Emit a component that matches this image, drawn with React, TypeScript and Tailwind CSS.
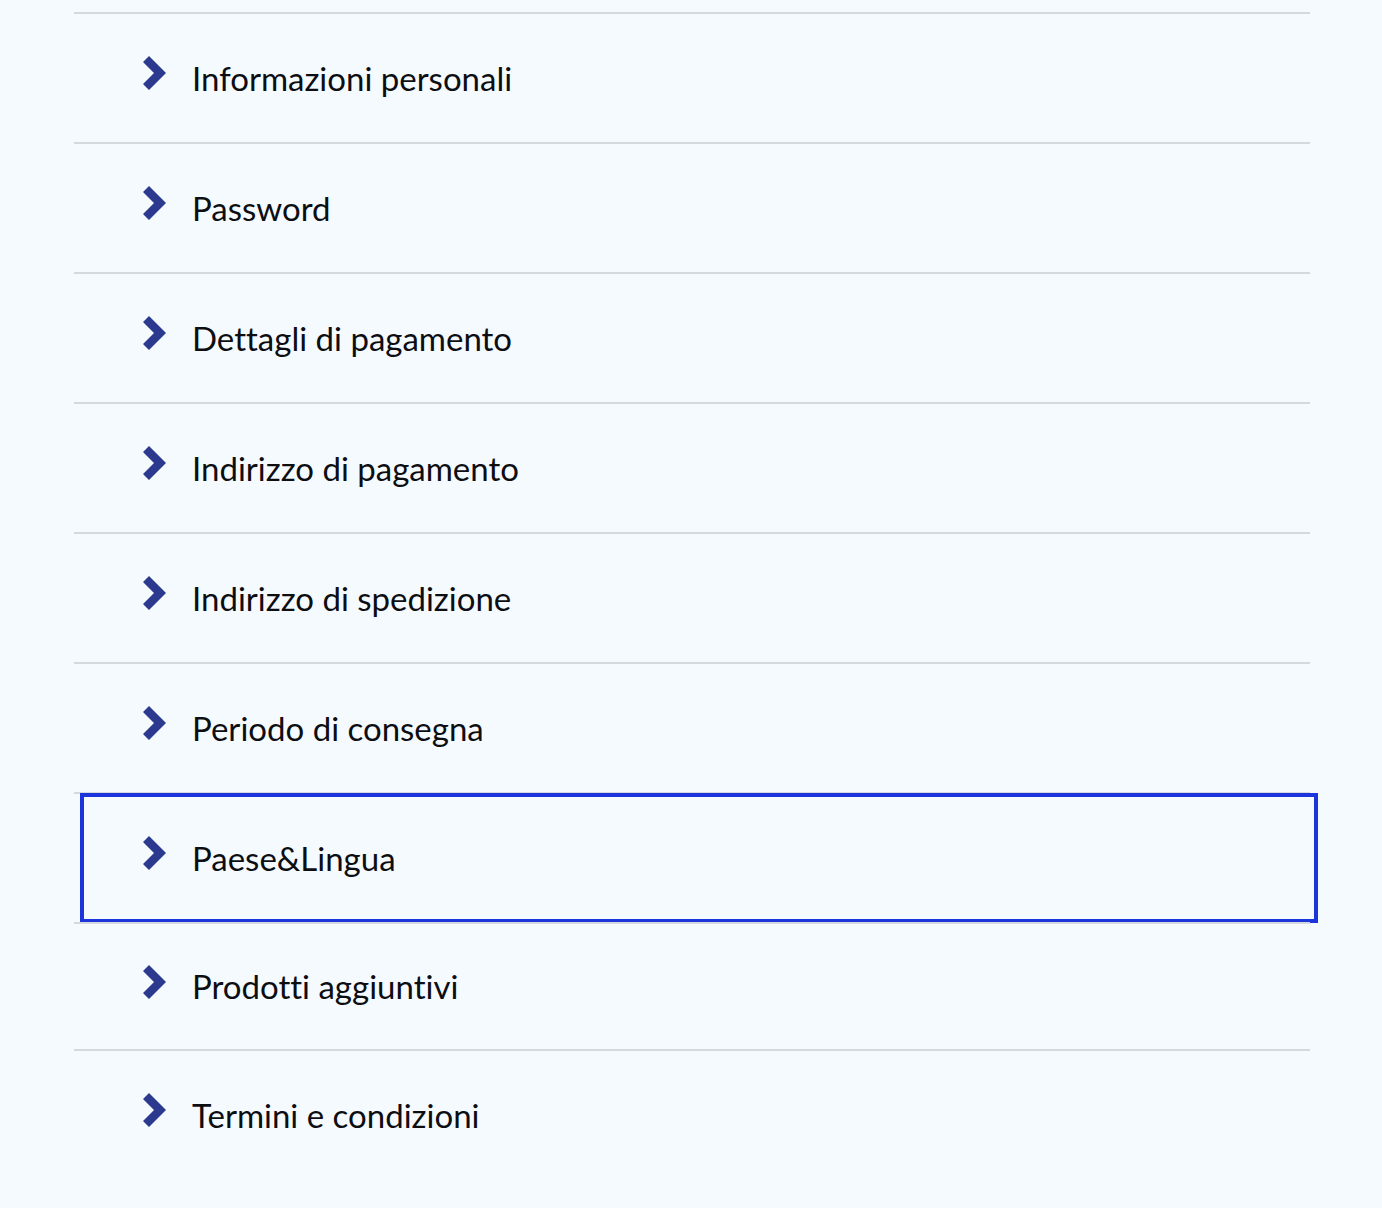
import React from 'react';

const items = [
  'Informazioni personali',
  'Password',
  'Dettagli di pagamento',
  'Indirizzo di pagamento',
  'Indirizzo di spedizione',
  'Periodo di consegna',
  'Paese&Lingua',
  'Prodotti aggiuntivi',
  'Termini e condizioni',
];

const Chevron = () => (
  <svg width="23" height="34" viewBox="0 0 23 34" className="mb-[10px] shrink-0">
    <polygon points="0,6 6,0 23,17 6,34 0,28 11,17" fill="#2b3a8f" />
  </svg>
);

export default function App() {
  return (
    <div
      className="min-h-[1208px] w-full bg-[#f5faff] pt-3"
      style={{ fontFamily: "Lato, 'Noto Sans', sans-serif" }}
    >
      <ul className="ml-[74px] w-[1236px]">
        {items.map((label, i) => {
          const focused = label === 'Paese&Lingua';
          const h = i === 7 ? 'h-[127px]' : 'h-[130px]';
          return (
            <li
              key={label}
              className={`relative flex items-center gap-[26px] border-t-2 border-[#d5d8dd] pl-[69px] ${h}`}
            >
              <Chevron />
              <span className="text-[33px] leading-none text-[#0d0e12] [font-variant-ligatures:none]">
                {label}
              </span>
              {focused && (
                <div className="pointer-events-none absolute left-[6px] right-[-8px] top-[-1px] bottom-[-1px] border-[4px] border-[#1b34dc]" />
              )}
            </li>
          );
        })}
      </ul>
    </div>
  );
}
